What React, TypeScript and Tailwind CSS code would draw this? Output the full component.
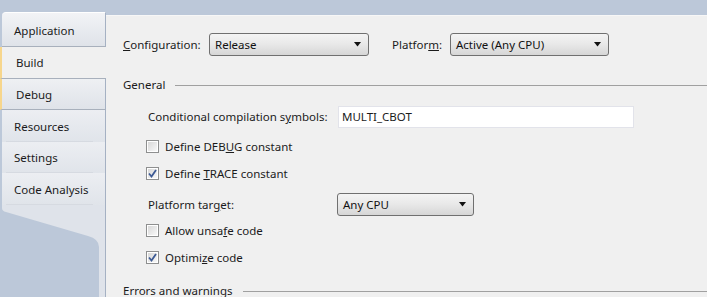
import React from "react";

const font = { fontFamily: '"Segoe UI", "Noto Sans", "Open Sans", sans-serif' };

function Dropdown({ value, width }: { value: string; width: string }) {
  return (
    <div
      className={`${width} h-[23px] flex items-center justify-between pl-[5px] pr-[6px] border border-[#707070] rounded-[3px] bg-gradient-to-b from-[#f4f4f4] via-[#e8e8e8] to-[#d6d6d6] text-[#111]`}
    >
      <span>{value}</span>
      <svg width="8" height="5" viewBox="0 0 8 5">
        <path d="M0 0 H7 L3.5 4.5 Z" fill="#111" />
      </svg>
    </div>
  );
}

function Checkbox({ checked, children }: { checked?: boolean; children: React.ReactNode }) {
  return (
    <div className="flex items-center h-[27px] pl-[40px] gap-[6px]">
      <div className="w-[13px] h-[13px] border border-[#8e8f8f] bg-white p-[1px]">
        <div className="w-full h-full bg-gradient-to-br from-[#d8d8d8] to-[#f8f8f8] flex items-center justify-center">
          {checked && (
            <svg width="9" height="9" viewBox="0 0 9 9">
              <path d="M1 4.5 L3.5 7.5 L8 1" stroke="#3d5a94" strokeWidth="1.8" fill="none" />
            </svg>
          )}
        </div>
      </div>
      <span>{children}</span>
    </div>
  );
}

function SectionTitle({ title }: { title: string }) {
  return (
    <div className="flex items-center h-[22px] pl-[17px]">
      <span className="mr-[10px]">{title}</span>
      <div className="flex-1 h-px bg-[#a0a0a0]" />
    </div>
  );
}

const tabs = ["Application", "Build", "Debug", "Resources", "Settings", "Code Analysis"];

export default function App() {
  return (
    <div
      className="w-[707px] h-[297px] flex bg-[#bcc8d9] overflow-hidden text-[11.5px] text-[#1b1b1b]"
      style={font}
    >
      {/* left tab column */}
      <div className="w-[106px] flex flex-col pt-[12px]">
        {tabs.map((t, i) => {
          if (t === "Build")
            return (
              <div
                key={t}
                className="h-[32px] flex items-center pl-[14px] pt-[1px] bg-[#f0f0f0] border-l-[2px] border-[#f7d68c] w-[106px]"
              >
                {t}
              </div>
            );
          if (t === "Application")
            return (
              <div
                key={t}
                className="h-[35px] ml-[2px] flex items-center pl-[12px] pt-[2px] rounded-tl-[4px] border-t border-white border-b border-b-[#a8b0bc] border-r border-r-[#a5b1c3] bg-gradient-to-b from-[#f2f3f6] to-[#dfe3e9]"
              >
                {t}
              </div>
            );
          if (t === "Debug")
            return (
              <div
                key={t}
                className="h-[32px] flex items-center pl-[14px] pt-[1px] border-l-[2px] border-l-[#f7d68c] border-t border-t-[#a8b0bc] border-b border-b-[#a8b0bc] border-r border-r-[#a5b1c3] bg-gradient-to-b from-[#eef0f3] to-[#dfe3e9]"
              >
                {t}
              </div>
            );
          return (
            <div
              key={t}
              className="h-[32px] ml-[2px] flex flex-col justify-center border-r border-r-[#a5b1c3] bg-gradient-to-b from-[#eceef2] to-[#e0e4ea]"
            >
              <div className="flex-1 flex items-center pl-[12px] pt-[2px]">{t}</div>
              {i < tabs.length && <div className="h-px mx-[4px] mr-[12px] bg-[#d6dae1]" />}
            </div>
          );
        })}
        <div className="flex-1 border-r border-r-[#a5b1c3] bg-[#dfe3ea]">
          <svg width="105" height="92" viewBox="0 0 105 92" className="block">
            <path d="M0 0 L2 0 L2 3 Q2 6 6 7 L88 31 Q99 34 99 42 L99 92 L0 92 Z" fill="#bcc8d9" />
          </svg>
        </div>
      </div>

      {/* content panel */}
      <div className="flex-1 mt-[15px] bg-[#f0f0f0] border-t border-[#f7f7f7] flex flex-col">
        <div className="flex items-center h-[23px] mt-[17px] pl-[17px]">
          <span className="w-[86px]">
            <u>C</u>onfiguration:
          </span>
          <Dropdown value="Release" width="w-[160px]" />
          <span className="ml-[23px] w-[58px]">
            Platfor<u>m</u>:
          </span>
          <Dropdown value="Active (Any CPU)" width="w-[159px]" />
        </div>
        <div className="h-px bg-[#a0a0a0] ml-[14px] mt-[15px]" />
        <div className="mt-[3px]">
          <SectionTitle title="General" />
        </div>
        <div className="flex items-center h-[22px] mt-[10px] pl-[42px]">
          <span className="w-[190px]">
            Conditional compilation s<u>y</u>mbols:
          </span>
          <div className="w-[296px] h-[22px] bg-white border border-[#e2e3ea] flex items-center pl-[3px]">
            MULTI_CBOT
          </div>
        </div>
        <div className="mt-[5px]">
          <Checkbox>
            Define DEB<u>U</u>G constant
          </Checkbox>
          <Checkbox checked>
            Define <u>T</u>RACE constant
          </Checkbox>
        </div>
        <div className="flex items-center h-[23px] mt-[6px] pl-[42px]">
          <span className="w-[189px]">
            Platform tar<u>g</u>et:
          </span>
          <Dropdown value="Any CPU" width="w-[137px]" />
        </div>
        <div className="mt-[1px]">
          <Checkbox>
            Allow unsa<u>f</u>e code
          </Checkbox>
          <Checkbox checked>
            Optimi<u>z</u>e code
          </Checkbox>
        </div>
        <div className="mt-[9px]">
          <SectionTitle title="Errors and warnings" />
        </div>
      </div>
    </div>
  );
}
